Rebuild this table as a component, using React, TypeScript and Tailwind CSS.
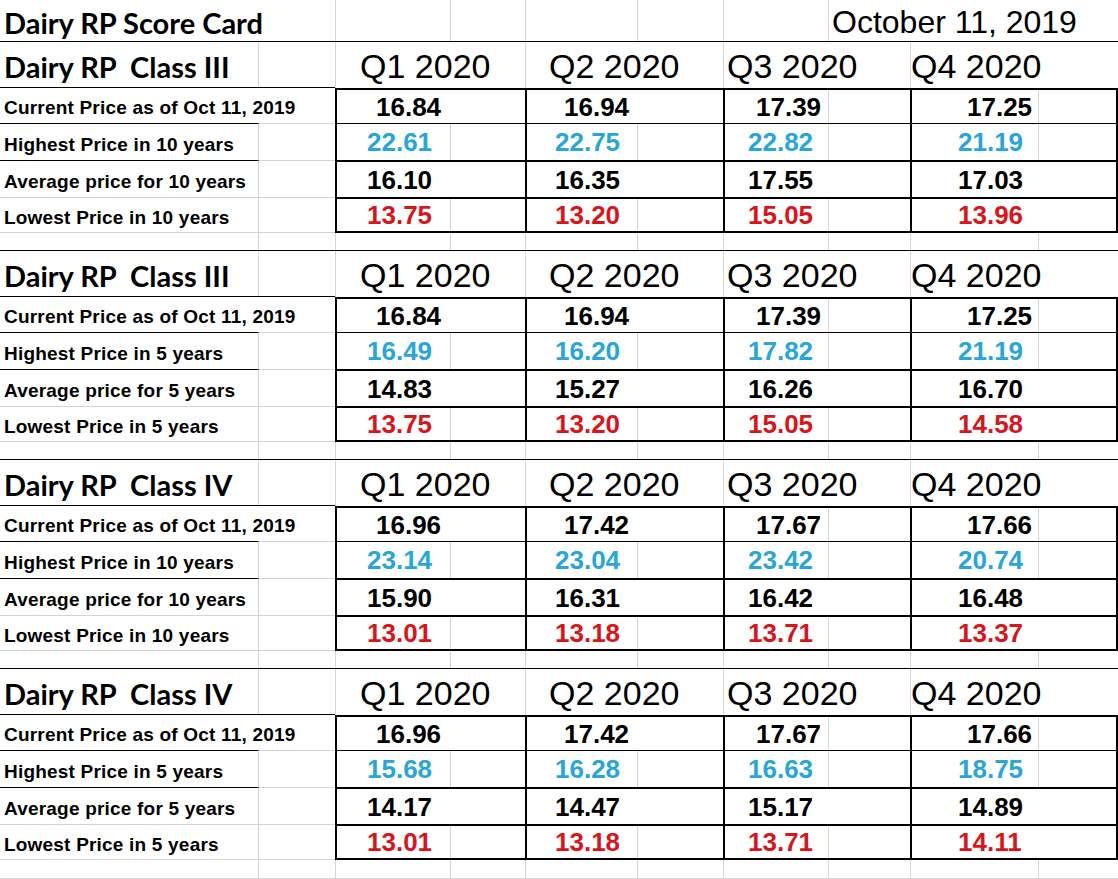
const G = "border-[#d4d4d4]";

type Quarter = {
  w: string;
  splitD: string;
  splitG: string;
  head: string;
  num: string;
  first: string;
  splitRows: number[];
  last?: boolean;
};

const quarters: Quarter[] = [
  { w: "w-[190px]", splitD: "w-[114px]", splitG: "w-[115px]", head: "pl-[24px]", num: "pl-[30px]", first: "pl-[39px]", splitRows: [1, 3] },
  { w: "w-[198px]", splitD: "w-[111px]", splitG: "w-[112px]", head: "pl-[23px]", num: "pl-[28px]", first: "pl-[37px]", splitRows: [1, 3] },
  { w: "w-[187px]", splitD: "w-[104px]", splitG: "w-[105px]", head: "pl-[3px]", num: "pl-[23px]", first: "pl-[31px]", splitRows: [0, 1, 3] },
  { w: "flex-1", splitD: "w-[127px]", splitG: "w-[128px]", head: "pl-0", num: "pl-[46px]", first: "pl-[55px]", splitRows: [0, 1], last: true },
];

const sections = [
  {
    title: "Dairy RP  Class III",
    years: 10,
    rows: [
      ["16.84", "16.94", "17.39", "17.25"],
      ["22.61", "22.75", "22.82", "21.19"],
      ["16.10", "16.35", "17.55", "17.03"],
      ["13.75", "13.20", "15.05", "13.96"],
    ],
  },
  {
    title: "Dairy RP  Class III",
    years: 5,
    rows: [
      ["16.84", "16.94", "17.39", "17.25"],
      ["16.49", "16.20", "17.82", "21.19"],
      ["14.83", "15.27", "16.26", "16.70"],
      ["13.75", "13.20", "15.05", "14.58"],
    ],
  },
  {
    title: "Dairy RP  Class IV",
    years: 10,
    rows: [
      ["16.96", "17.42", "17.67", "17.66"],
      ["23.14", "23.04", "23.42", "20.74"],
      ["15.90", "16.31", "16.42", "16.48"],
      ["13.01", "13.18", "13.71", "13.37"],
    ],
  },
  {
    title: "Dairy RP  Class IV",
    years: 5,
    rows: [
      ["16.96", "17.42", "17.67", "17.66"],
      ["15.68", "16.28", "16.63", "18.75"],
      ["14.17", "14.47", "15.17", "14.89"],
      ["13.01", "13.18", "13.71", "14.11"],
    ],
  },
];

const rowHeights = ["h-[35px]", "h-[37px]", "h-[37px]", "h-[36px]"];
const numColors = ["text-black", "text-[#29a5dc]", "text-black", "text-[#d9151c]"];
const tableTop = ["border-t-2", "border-t", "border-t-2", "border-t-2 border-b-2"];
const labelA = [
  "",
  "border-t border-r border-t-black border-r-[#d4d4d4]",
  "border-t border-r border-t-black border-r-[#d4d4d4]",
  "border-t border-r border-b border-[#d4d4d4]",
];
const labelB = ["", "border-t border-[#d4d4d4]", "border-t border-[#d4d4d4]", "border-t border-b border-[#d4d4d4]"];

const labels = (n: number) => [
  "Current Price as of Oct 11, 2019",
  `Highest Price in ${n} years`,
  `Average price for ${n} years`,
  `Lowest Price in ${n} years`,
];

const GapRow = ({ last }: { last: boolean }) => (
  <div className={`flex ${last ? `h-[19px] border-b ${G}` : "h-[18px] border-b border-black"}`}>
    <div className={`w-[259px] shrink-0 border-r ${G}`} />
    <div className={`w-[76px] shrink-0`} />
    {quarters.map((q, i) => (
      <div key={i} className={`${q.w} flex shrink-0 border-l ${G}`}>
        <div className={`${q.splitG} shrink-0 border-r ${G}`} />
      </div>
    ))}
  </div>
);

const Section = ({ s, last }: { s: (typeof sections)[number]; last: boolean }) => {
  const text = labels(s.years);
  return (
    <div>
      <div className="flex h-[46px]">
        <div className="w-[335px] shrink-0 flex border-b border-black">
          <div className={`w-[259px] shrink-0 flex items-center pl-[4px] pt-[3px] border-r ${G}`}>
            <span className="whitespace-pre font-['Lato',sans-serif] font-bold text-[29px] leading-none">{s.title}</span>
          </div>
        </div>
        {quarters.map((q, i) => (
          <div key={i} className={`${q.w} shrink-0 flex items-center pt-[2px] border-l ${G} ${q.head}`}>
            <span className="whitespace-nowrap text-[34px] leading-none">Q{i + 1} 2020</span>
          </div>
        ))}
      </div>

      {s.rows.map((row, r) => (
        <div key={r} className={`flex ${rowHeights[r]}`}>
          <div className="w-[335px] shrink-0 flex">
            <div className={`w-[259px] shrink-0 flex items-center pl-[4px] pt-[4px] ${labelA[r]}`}>
              <span className="whitespace-nowrap text-[19px] tracking-[0.2px] font-bold leading-none">{text[r]}</span>
            </div>
            <div className={`flex-1 ${labelB[r]}`} />
          </div>
          {quarters.map((q, i) => (
            <div
              key={i}
              className={`${q.w} shrink-0 flex border-l-2 border-black ${tableTop[r]} ${q.last ? "border-r-2" : ""}`}
            >
              <div
                className={`${q.splitD} shrink-0 flex items-center ${r === 0 ? q.first : q.num} ${
                  q.splitRows.includes(r) ? `border-r ${G}` : ""
                }`}
              >
                <span className={`whitespace-nowrap text-[26px] font-bold leading-none ${numColors[r]}`}>{row[i]}</span>
              </div>
            </div>
          ))}
        </div>
      ))}

      <GapRow last={last} />
    </div>
  );
};

export default function App() {
  return (
    <div className="w-[1118px] h-[879px] overflow-hidden bg-white text-black font-['Liberation_Sans',Arial,sans-serif]">
      <div className="flex h-[42px] border-b border-black">
        <div className="w-[335px] shrink-0 flex items-center pl-[4px] pt-[3px]">
          <span className="whitespace-nowrap font-['Lato',sans-serif] font-bold text-[29px] leading-none">Dairy RP Score Card</span>
        </div>
        <div className={`w-[190px] shrink-0 flex border-l ${G}`}>
          <div className={`w-[115px] shrink-0 border-r ${G}`} />
        </div>
        <div className={`w-[198px] shrink-0 flex border-l ${G}`}>
          <div className={`w-[112px] shrink-0 border-r ${G}`} />
        </div>
        <div className={`flex-1 flex border-l ${G}`}>
          <div className={`w-[105px] shrink-0 border-r ${G}`} />
          <div className="flex items-center pl-[3px] pt-[3px]">
            <span className="whitespace-nowrap text-[32px] leading-none">October 11, 2019</span>
          </div>
        </div>
      </div>
      {sections.map((s, i) => (
        <Section key={i} s={s} last={i === sections.length - 1} />
      ))}
    </div>
  );
}
